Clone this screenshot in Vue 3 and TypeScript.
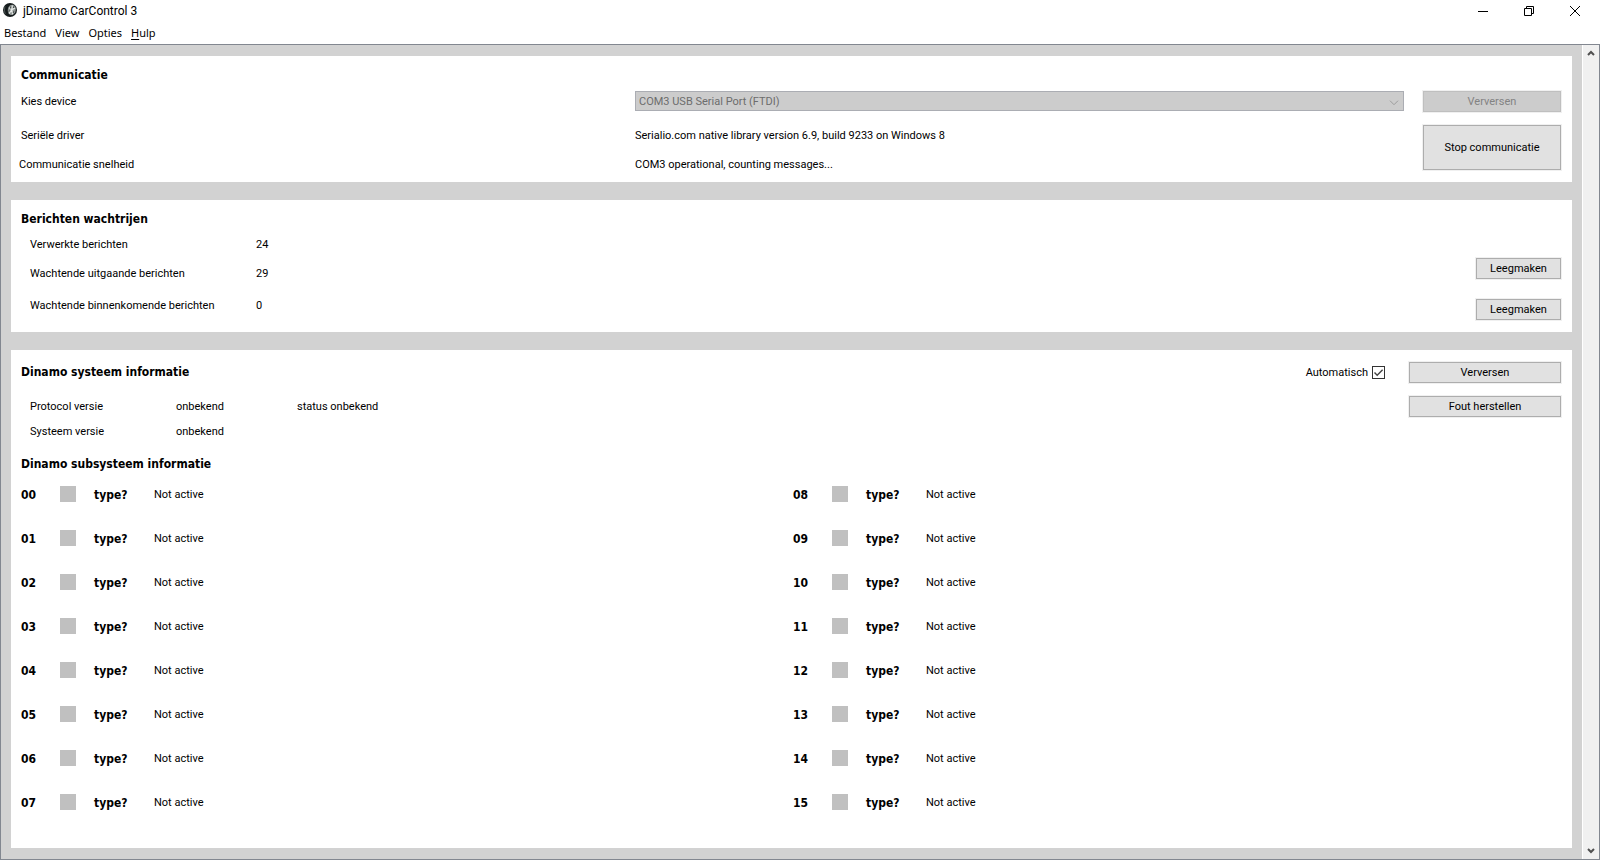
<script setup lang="ts">
import { ref } from 'vue'

interface Subsystem {
  id: string
  type: string
  status: string
}

const device = ref('COM3 USB Serial Port (FTDI)')
const automatic = ref(true)

const subsystems: Subsystem[] = Array.from({ length: 16 }, (_, i) => ({
  id: String(i).padStart(2, '0'),
  type: 'type?',
  status: 'Not active',
}))
</script>

<template>
  <div class="window">
    <header>
      <div class="titlebar">
        <svg class="logo" viewBox="0 0 14 14" width="14" height="14" aria-hidden="true">
          <circle cx="7" cy="7" r="7" fill="#161c1d" />
          <path d="M2 3.2Q.6 7 2.2 10.8" fill="none" stroke="#4b5554" stroke-width="1" />
          <ellipse cx="8.8" cy="6.8" rx="4" ry="5.2" fill="#8f9694" transform="rotate(12 8.8 6.8)" />
          <path d="M9.4 2.4 8.8 6.8 6 10.6M12 5 8.8 6.8 9.6 11.4M6 4.6l2.8 2.2" fill="none" stroke="#e6e9e7" stroke-width="1.1" />
          <path d="M7.6 3.6v2M10.8 8.2l-.6 1.8M6.4 7.4l-.6 1.2M10.9 3.4l-.5 1.6" stroke="#3a4240" stroke-width=".9" />
        </svg>
        <h1>jDinamo CarControl 3</h1>
        <div class="controls">
          <button type="button" aria-label="Minimize">
            <svg viewBox="0 0 10 10" width="10" height="10"><path d="M0 5.5h10" /></svg>
          </button>
          <button type="button" aria-label="Restore">
            <svg viewBox="0 0 10 10" width="10" height="10"><path d="M.5 2.5h7v7h-7zM2.5 2.5v-2h7v7h-2" /></svg>
          </button>
          <button type="button" aria-label="Close">
            <svg viewBox="0 0 10 10" width="10" height="10"><path d="M0 0l10 10M10 0L0 10" /></svg>
          </button>
        </div>
      </div>
      <nav class="menu">
        <button type="button">Bestand</button>
        <button type="button">View</button>
        <button type="button">Opties</button>
        <button type="button"><u>H</u>ulp</button>
      </nav>
    </header>

    <div class="frame">
      <main>
        <section>
          <h2>Communicatie</h2>
          <div class="comm">
            <label for="device">Kies device</label>
            <div class="combo">
              <select id="device" v-model="device" disabled>
                <option>COM3 USB Serial Port (FTDI)</option>
              </select>
              <svg viewBox="0 0 10 6" width="10" height="6" aria-hidden="true"><path d="M1 .7l4 4 4-4" /></svg>
            </div>
            <button type="button" class="btn" disabled>Verversen</button>

            <span>Seriële driver</span>
            <span>Serialio.com native library version 6.9, build 9233 on Windows 8</span>
            <button type="button" class="btn stop">Stop communicatie</button>

            <span class="speed">Communicatie snelheid</span>
            <span>COM3 operational, counting messages...</span>
          </div>
        </section>

        <section>
          <h2>Berichten wachtrijen</h2>
          <div class="split">
            <dl class="queues">
              <dt>Verwerkte berichten</dt>
              <dd>24</dd>
              <dt>Wachtende uitgaande berichten</dt>
              <dd>29</dd>
              <dt>Wachtende binnenkomende berichten</dt>
              <dd>0</dd>
            </dl>
            <div class="clear">
              <button type="button" class="btn">Leegmaken</button>
              <button type="button" class="btn">Leegmaken</button>
            </div>
          </div>
        </section>

        <section class="grow">
          <div class="split system">
            <div>
              <h2>Dinamo systeem informatie</h2>
              <dl class="versions">
                <dt>Protocol versie</dt>
                <dd>onbekend</dd>
                <dd>status onbekend</dd>
                <dt>Systeem versie</dt>
                <dd>onbekend</dd>
              </dl>
            </div>
            <div class="actions">
              <label class="auto">Automatisch
                <span class="check">
                  <input v-model="automatic" type="checkbox" />
                  <svg v-if="automatic" viewBox="0 0 13 13" width="13" height="13" aria-hidden="true"><path d="M2.5 6.5l2.7 2.8 5.4-5.6" /></svg>
                </span>
              </label>
              <button type="button" class="btn">Verversen</button>
              <button type="button" class="btn second">Fout herstellen</button>
            </div>
          </div>

          <h2>Dinamo subsysteem informatie</h2>
          <ul class="subsystems">
            <li v-for="s in subsystems" :key="s.id">
              <b>{{ s.id }}</b>
              <i class="lamp"></i>
              <b>{{ s.type }}</b>
              <span>{{ s.status }}</span>
            </li>
          </ul>
        </section>
      </main>

      <div class="scrollbar">
        <button type="button" aria-label="Scroll up">
          <svg viewBox="0 0 8 7" width="8" height="7"><path d="M1 5l3-3 3 3" /></svg>
        </button>
        <button type="button" aria-label="Scroll down">
          <svg viewBox="0 0 8 7" width="8" height="7"><path d="M1 2l3 3 3-3" /></svg>
        </button>
      </div>
    </div>
  </div>
</template>

<style>
body {
  margin: 0;
}
</style>

<style scoped>
* {
  box-sizing: border-box;
}

.window {
  display: flex;
  flex-direction: column;
  min-height: 100vh;
  background: #fff;
  color: #000;
  font-family: Roboto, "Liberation Sans", sans-serif;
  font-size: 11px;
  line-height: 23px;
}

button {
  margin: 0;
  padding: 0;
  border: 0;
  background: none;
  color: inherit;
  font: inherit;
}

svg {
  display: block;
}

.titlebar {
  display: flex;
  align-items: center;
  height: 22px;
  padding-left: 3px;
}

.logo {
  margin-bottom: 2px;
}

h1 {
  flex: 1;
  margin: 0 0 0 6px;
  font-size: 12px;
  font-weight: normal;
}

.controls {
  display: flex;
}

.controls button {
  display: grid;
  place-items: center;
  width: 46px;
  height: 22px;
}

.controls button:last-child {
  margin-right: 2px;
}

.controls path {
  fill: none;
  stroke: #000;
}

.menu {
  display: flex;
  gap: 9px;
  height: 22px;
  padding-left: 4px;
  font: 11px/22px "Noto Sans", "Open Sans", sans-serif;
}

.menu u {
  text-underline-offset: 2px;
}

.frame {
  flex: 1;
  display: flex;
  border: 1px solid #828790;
  background: #d2d2d2;
}

main {
  flex: 1;
  display: flex;
  flex-direction: column;
  gap: 18px;
  padding: 11px 10px;
}

section {
  padding: 8px 10px 0;
  background: #fff;
}

.grow {
  flex: 1;
}

h2,
b {
  margin: 0;
  font: bold 12px/22px "DejaVu Sans Condensed", "DejaVu Sans", sans-serif;
}

/* Light outer ring with the darker edge drawn just inside it */
.btn {
  display: block;
  height: 23px;
  border: 1px solid #f0f0f0;
  background: #e1e1e1;
  box-shadow: inset 0 0 0 1px #adadad;
  line-height: 21px;
}

.btn:disabled {
  background: #ccc;
  box-shadow: inset 0 0 0 1px #bfbfbf;
  color: #838383;
}

.comm {
  display: grid;
  grid-template-columns: 614fr 787fr 140px;
  grid-template-rows: 34px 29px 29px;
  align-items: start;
  margin-top: 4px;
}

.speed {
  margin-left: -2px;
}

.stop {
  grid-row: 2 / 4;
  grid-column: 3;
  height: 47px;
}

.combo {
  position: relative;
  margin-right: 18px;
  padding: 1px 0;
}

.combo select {
  display: block;
  width: 100%;
  height: 20px;
  padding: 1px 3px 0;
  border: 1px solid #abadb3;
  border-radius: 0;
  background: #ccc;
  color: #6d6d6d;
  font: inherit;
  line-height: 17px;
  opacity: 1;
  appearance: none;
}

.combo svg {
  position: absolute;
  right: 5px;
  top: 10px;
  fill: none;
  stroke: #9c9c9c;
}

.split {
  display: flex;
  justify-content: space-between;
}

dl,
dd {
  margin: 0;
}

.queues {
  display: grid;
  grid-template-columns: 226px auto;
  grid-template-rows: 29px 32px 38px;
  margin: 3px 0 0 9px;
}

.clear {
  display: flex;
  flex-direction: column;
  gap: 18px;
  padding: 27px 0 11px;
}

.clear .btn {
  width: 87px;
}

.system {
  padding-top: 3px;
  margin-bottom: 8px;
}

.versions {
  display: grid;
  grid-template-columns: 146px 121px auto;
  grid-auto-rows: 25px;
  margin: 12px 0 0 9px;
}

.actions {
  display: grid;
  grid-template-columns: auto 154px;
  gap: 11px 23px;
  align-content: start;
}

.second {
  grid-column: 2;
}

.auto {
  display: flex;
  align-items: center;
  gap: 4px;
}

.check {
  position: relative;
  width: 13px;
  height: 13px;
}

.check input {
  display: block;
  width: 13px;
  height: 13px;
  margin: 0;
  border: 1px solid #333;
  background: #fff;
  appearance: none;
}

.check svg {
  position: absolute;
  inset: 0;
  fill: none;
  stroke: #444;
  stroke-width: 1.4;
  pointer-events: none;
}

.subsystems {
  display: grid;
  grid-template-columns: 1fr 1fr;
  grid-template-rows: repeat(8, 44px);
  grid-auto-flow: column;
  column-gap: 3px;
  margin: 0;
  padding: 8px 0 0;
  list-style: none;
}

li {
  display: grid;
  grid-template-columns: 39px 34px 60px auto;
  align-items: center;
  height: 23px;
}

.lamp {
  width: 16px;
  height: 16px;
  margin-bottom: 2px;
  background: #c0c0c0;
}

.scrollbar {
  display: flex;
  flex-direction: column;
  justify-content: space-between;
  width: 17px;
  border-left: 1px solid #fff;
  background: #f0f0f0;
}

.scrollbar button {
  display: grid;
  place-items: center;
  height: 17px;
}

.scrollbar path {
  fill: none;
  stroke: #505050;
  stroke-width: 2;
}
</style>
